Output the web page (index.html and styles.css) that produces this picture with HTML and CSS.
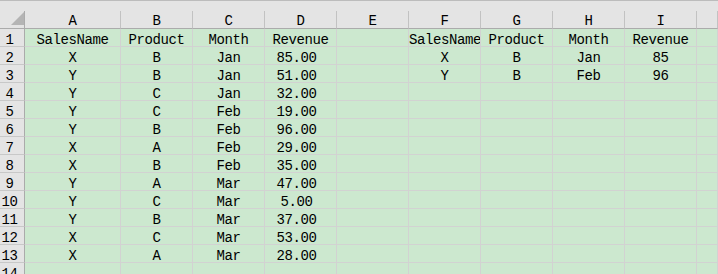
FILE: index.html
```html
<!DOCTYPE html>
<html>
<head>
<meta charset="utf-8">
<link rel="stylesheet" href="styles.css">
</head>
<body>
<div class="topbar"></div>
<div class="sheet">
  <div class="corner"><svg width="13" height="13" viewBox="0 0 13 13"><polygon points="13,0 13,13 0,13" fill="#b4b4b4"/></svg></div>
  <div class="ch">A</div><div class="ch">B</div><div class="ch">C</div><div class="ch">D</div><div class="ch">E</div><div class="ch">F</div><div class="ch">G</div><div class="ch">H</div><div class="ch">I</div><div class="ch"></div>

  <div class="rh">1</div><div class="c">SalesName</div><div class="c">Product</div><div class="c">Month</div><div class="c">Revenue</div><div class="c"></div><div class="c">SalesName</div><div class="c">Product</div><div class="c">Month</div><div class="c">Revenue</div><div class="c"></div>
  <div class="rh">2</div><div class="c">X</div><div class="c">B</div><div class="c">Jan</div><div class="c num">85.00</div><div class="c"></div><div class="c">X</div><div class="c">B</div><div class="c">Jan</div><div class="c">85</div><div class="c"></div>
  <div class="rh">3</div><div class="c">Y</div><div class="c">B</div><div class="c">Jan</div><div class="c num">51.00</div><div class="c"></div><div class="c">Y</div><div class="c">B</div><div class="c">Feb</div><div class="c">96</div><div class="c"></div>
  <div class="rh">4</div><div class="c">Y</div><div class="c">C</div><div class="c">Jan</div><div class="c num">32.00</div><div class="c"></div><div class="c"></div><div class="c"></div><div class="c"></div><div class="c"></div><div class="c"></div>
  <div class="rh">5</div><div class="c">Y</div><div class="c">C</div><div class="c">Feb</div><div class="c num">19.00</div><div class="c"></div><div class="c"></div><div class="c"></div><div class="c"></div><div class="c"></div><div class="c"></div>
  <div class="rh">6</div><div class="c">Y</div><div class="c">B</div><div class="c">Feb</div><div class="c num">96.00</div><div class="c"></div><div class="c"></div><div class="c"></div><div class="c"></div><div class="c"></div><div class="c"></div>
  <div class="rh">7</div><div class="c">X</div><div class="c">A</div><div class="c">Feb</div><div class="c num">29.00</div><div class="c"></div><div class="c"></div><div class="c"></div><div class="c"></div><div class="c"></div><div class="c"></div>
  <div class="rh">8</div><div class="c">X</div><div class="c">B</div><div class="c">Feb</div><div class="c num">35.00</div><div class="c"></div><div class="c"></div><div class="c"></div><div class="c"></div><div class="c"></div><div class="c"></div>
  <div class="rh">9</div><div class="c">Y</div><div class="c">A</div><div class="c">Mar</div><div class="c num">47.00</div><div class="c"></div><div class="c"></div><div class="c"></div><div class="c"></div><div class="c"></div><div class="c"></div>
  <div class="rh">10</div><div class="c">Y</div><div class="c">C</div><div class="c">Mar</div><div class="c num">5.00</div><div class="c"></div><div class="c"></div><div class="c"></div><div class="c"></div><div class="c"></div><div class="c"></div>
  <div class="rh">11</div><div class="c">Y</div><div class="c">B</div><div class="c">Mar</div><div class="c num">37.00</div><div class="c"></div><div class="c"></div><div class="c"></div><div class="c"></div><div class="c"></div><div class="c"></div>
  <div class="rh">12</div><div class="c">X</div><div class="c">C</div><div class="c">Mar</div><div class="c num">53.00</div><div class="c"></div><div class="c"></div><div class="c"></div><div class="c"></div><div class="c"></div><div class="c"></div>
  <div class="rh">13</div><div class="c">X</div><div class="c">A</div><div class="c">Mar</div><div class="c num">28.00</div><div class="c"></div><div class="c"></div><div class="c"></div><div class="c"></div><div class="c"></div><div class="c"></div>
  <div class="rh">14</div><div class="c"></div><div class="c"></div><div class="c"></div><div class="c"></div><div class="c"></div><div class="c"></div><div class="c"></div><div class="c"></div><div class="c"></div><div class="c"></div>
</div>
</body>
</html>
```

FILE: styles.css
```css
html, body {
  margin: 0;
  padding: 0;
  background: #e4e4e4;
  overflow: hidden;
}
body {
  font-family: "Liberation Mono", "DejaVu Sans Mono", monospace;
  font-size: 14px;
  letter-spacing: -0.4px;
  color: #000;
}
.topbar {
  height: 11px;
  box-sizing: border-box;
  border-top: 1px solid #bcbcbc;
  background: #e4e4e4;
}
.sheet {
  display: grid;
  grid-template-columns: 25px 96px repeat(8, 72px) 1fr;
  grid-auto-rows: 18px;
}
.sheet > div {
  box-sizing: border-box;
  white-space: nowrap;
  overflow: hidden;
  text-align: center;
}
.corner {
  background: #e4e4e4;
  border-right: 1px solid #ababab;
  border-bottom: 1px solid #ababab;
  padding: 1px 0 0 11px;
  line-height: 0;
  text-align: left !important;
}
.ch {
  background: #e4e4e4;
  border-right: 1px solid #c2c2c2;
  border-bottom: 1px solid #ababab;
  padding-top: 3px;
  line-height: 14px;
}
.rh {
  background: #e4e4e4;
  border-right: 1px solid #ababab;
  border-bottom: 1px solid #c8c8c8;
  padding: 4px 5px 0 0;
  line-height: 14px;
}
.c {
  background: #cce8cf;
  border-right: 1px solid #d2d2d2;
  border-bottom: 1px solid #d2d2d2;
  padding-top: 4px;
  line-height: 14px;
}
.num {
  padding-right: 8px;
}
```
